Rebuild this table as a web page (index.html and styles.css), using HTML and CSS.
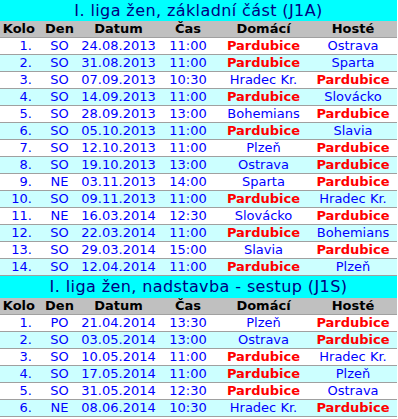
FILE: index.html
```html
<!DOCTYPE html>
<html lang="cs">
<head>
<meta charset="utf-8">
<link rel="stylesheet" href="styles.css">
</head>
<body>
<table class="sched">
<colgroup><col class="c-kolo"><col class="c-den"><col class="c-dat"><col class="c-cas"><col class="c-dom"><col class="c-hos"></colgroup>
<tr class="title"><td colspan="6">I. liga žen, základní část (J1A)</td></tr>
<tr class="head"><th class="kolo">Kolo</th><th>Den</th><th>Datum</th><th>Čas</th><th>Domácí</th><th>Hosté</th></tr>
<tr><td class="kolo">1.</td><td>SO</td><td>24.08.2013</td><td>11:00</td><td class="pce">Pardubice</td><td>Ostrava</td></tr>
<tr class="alt"><td class="kolo">2.</td><td>SO</td><td>31.08.2013</td><td>11:00</td><td class="pce">Pardubice</td><td>Sparta</td></tr>
<tr><td class="kolo">3.</td><td>SO</td><td>07.09.2013</td><td>10:30</td><td>Hradec Kr.</td><td class="pce">Pardubice</td></tr>
<tr class="alt"><td class="kolo">4.</td><td>SO</td><td>14.09.2013</td><td>11:00</td><td class="pce">Pardubice</td><td>Slovácko</td></tr>
<tr><td class="kolo">5.</td><td>SO</td><td>28.09.2013</td><td>13:00</td><td>Bohemians</td><td class="pce">Pardubice</td></tr>
<tr class="alt"><td class="kolo">6.</td><td>SO</td><td>05.10.2013</td><td>11:00</td><td class="pce">Pardubice</td><td>Slavia</td></tr>
<tr><td class="kolo">7.</td><td>SO</td><td>12.10.2013</td><td>11:00</td><td>Plzeň</td><td class="pce">Pardubice</td></tr>
<tr class="alt"><td class="kolo">8.</td><td>SO</td><td>19.10.2013</td><td>13:00</td><td>Ostrava</td><td class="pce">Pardubice</td></tr>
<tr><td class="kolo">9.</td><td>NE</td><td>03.11.2013</td><td>14:00</td><td>Sparta</td><td class="pce">Pardubice</td></tr>
<tr class="alt"><td class="kolo">10.</td><td>SO</td><td>09.11.2013</td><td>11:00</td><td class="pce">Pardubice</td><td>Hradec Kr.</td></tr>
<tr><td class="kolo">11.</td><td>NE</td><td>16.03.2014</td><td>12:30</td><td>Slovácko</td><td class="pce">Pardubice</td></tr>
<tr class="alt"><td class="kolo">12.</td><td>SO</td><td>22.03.2014</td><td>11:00</td><td class="pce">Pardubice</td><td>Bohemians</td></tr>
<tr><td class="kolo">13.</td><td>SO</td><td>29.03.2014</td><td>15:00</td><td>Slavia</td><td class="pce">Pardubice</td></tr>
<tr class="alt"><td class="kolo">14.</td><td>SO</td><td>12.04.2014</td><td>11:00</td><td class="pce">Pardubice</td><td>Plzeň</td></tr>
<tr class="title title2"><td colspan="6">I. liga žen, nadstavba - sestup (J1S)</td></tr>
<tr class="head"><th class="kolo">Kolo</th><th>Den</th><th>Datum</th><th>Čas</th><th>Domácí</th><th>Hosté</th></tr>
<tr><td class="kolo">1.</td><td>PO</td><td>21.04.2014</td><td>13:30</td><td>Plzeň</td><td class="pce">Pardubice</td></tr>
<tr class="alt"><td class="kolo">2.</td><td>SO</td><td>03.05.2014</td><td>13:00</td><td>Ostrava</td><td class="pce">Pardubice</td></tr>
<tr><td class="kolo">3.</td><td>SO</td><td>10.05.2014</td><td>11:00</td><td class="pce">Pardubice</td><td>Hradec Kr.</td></tr>
<tr class="alt"><td class="kolo">4.</td><td>SO</td><td>17.05.2014</td><td>11:00</td><td class="pce">Pardubice</td><td>Plzeň</td></tr>
<tr><td class="kolo">5.</td><td>SO</td><td>31.05.2014</td><td>12:30</td><td class="pce">Pardubice</td><td>Ostrava</td></tr>
<tr class="alt"><td class="kolo">6.</td><td>NE</td><td>08.06.2014</td><td>10:30</td><td>Hradec Kr.</td><td class="pce">Pardubice</td></tr>
</table>
</body>
</html>
```
FILE: styles.css
```css
html, body { margin: 0; padding: 0; background: #ffffff; }
.sched {
  width: 397px;
  table-layout: fixed;
  border-collapse: collapse;
  font-family: "DejaVu Sans", Verdana, sans-serif;
  font-size: 13px;
  color: #0000ff;
}
.c-kolo { width: 40px; }
.c-den { width: 39px; }
.c-dat { width: 79px; }
.c-cas { width: 60px; }
.c-dom { width: 91px; }
.c-hos { width: 88px; }
.sched td, .sched th {
  padding: 0;
  height: 16px;
  line-height: 16px;
  text-align: center;
  white-space: nowrap;
  overflow: hidden;
  border-bottom: 1px solid #a0a0a0;
}
.sched .kolo { text-align: right; padding-right: 8px; }
.sched .head .kolo { padding-right: 5px; }
.title td {
  background: #00ffff;
  color: #000080;
  font-size: 16px;
  letter-spacing: 0.4px;
  height: 21px;
  line-height: 21px;
  border-bottom: 0;
}
.title2 td { height: 22px; line-height: 22px; }
.head th {
  background: #c0c0c0;
  color: #000000;
  font-weight: bold;
  height: 16px;
  line-height: 16px;
}
.alt td { background: #ccffff; }
.sched .pce { color: #ff0000; font-weight: bold; }
```
